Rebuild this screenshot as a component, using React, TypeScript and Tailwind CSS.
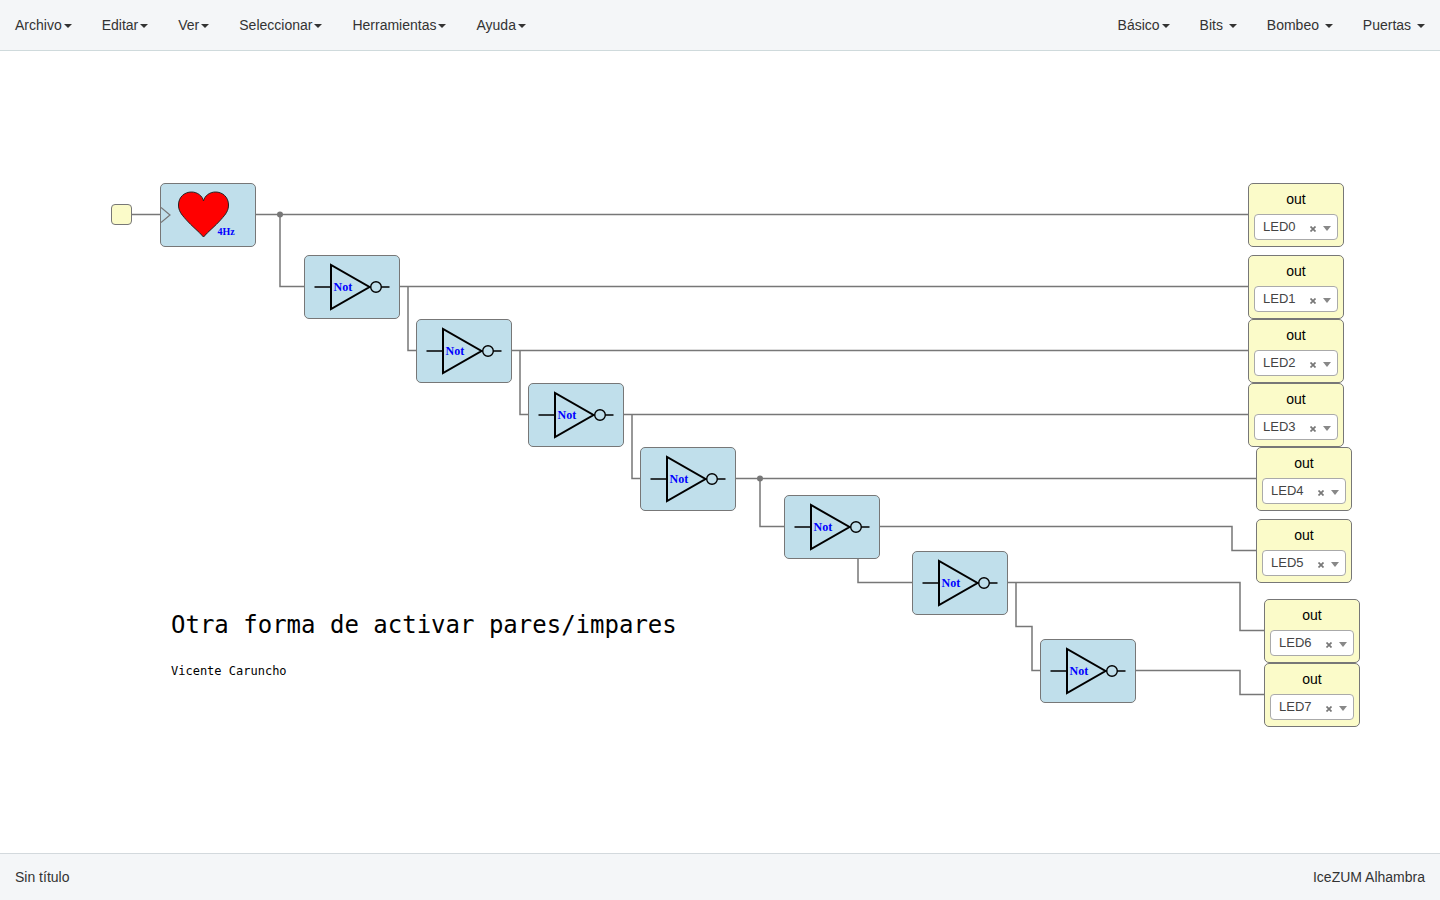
type Point = { x: number; y: number };

const leftMenus = ['Archivo', 'Editar', 'Ver', 'Seleccionar', 'Herramientas', 'Ayuda'];
const rightMenus = ['Básico', 'Bits ', 'Bombeo ', 'Puertas '];

const gates: Point[] = [
  { x: 304, y: 204 },
  { x: 416, y: 268 },
  { x: 528, y: 332 },
  { x: 640, y: 396 },
  { x: 784, y: 444 },
  { x: 912, y: 500 },
  { x: 1040, y: 588 },
];

const outputs: Point[] = [
  { x: 1248, y: 132 },
  { x: 1248, y: 204 },
  { x: 1248, y: 268 },
  { x: 1248, y: 332 },
  { x: 1256, y: 396 },
  { x: 1256, y: 468 },
  { x: 1264, y: 548 },
  { x: 1264, y: 612 },
];

const pins = ['LED0', 'LED1', 'LED2', 'LED3', 'LED4', 'LED5', 'LED6', 'LED7'];

const wires = [
  'M132 163.5H160',
  'M256 163.5H1248',
  'M280 163.5V235.5H304',
  'M400 235.5H1248',
  'M408 235.5V299.5H416',
  'M512 299.5H1248',
  'M520 299.5V363.5H528',
  'M624 363.5H1248',
  'M632 363.5V427.5H640',
  'M736 427.5H1256',
  'M760 427.5V475.5H784',
  'M880 475.5H1232V499.5H1256',
  'M858 475.5V531.5H912',
  'M1008 531.5H1240V579.5H1264',
  'M1016 531.5V575.5H1032V619.5H1040',
  'M1136 619.5H1240V643.5H1264',
];

function Menu({ label }: { label: string }) {
  return (
    <button type="button" className="flex items-center gap-0.5 whitespace-pre px-[15px] py-[15px] leading-5">
      {label}
      <span className="mt-0.5 border-x-4 border-t-4 border-x-transparent border-t-[#333]" />
    </button>
  );
}

function NotGate({ x, y }: Point) {
  return (
    <div
      className="absolute h-16 w-24 rounded-[5px] border border-[#777] bg-[#c0dfeb]"
      style={{ left: x, top: y }}
    >
      <svg viewBox="1 1 94 62" className="h-full w-full" fill="none" stroke="#000">
        <path d="M10.5 32H27M77.3 32H85.5" strokeWidth="1.3" />
        <path d="M27 10V54L65.5 32Z" strokeWidth="2" />
        <circle cx="72" cy="32" r="5.3" strokeWidth="1.4" />
        <text
          x="29.5"
          y="36"
          fill="#00f"
          stroke="none"
          fontSize="12"
          fontWeight="700"
          fontFamily="'Liberation Serif', serif"
        >
          Not
        </text>
      </svg>
    </div>
  );
}

function HeartBlock({ x, y }: Point) {
  return (
    <div
      className="absolute h-16 w-24 rounded-[5px] border border-[#777] bg-[#c0dfeb]"
      style={{ left: x, top: y }}
    >
      <svg viewBox="1 1 94 62" className="h-full w-full" fill="none">
        <path d="M1 24.5L10 32L1 39.5" stroke="#777" strokeWidth="1.2" />
        <path
          d="M43.5 54C38.5 48 32 43.5 26 36.5C21 31 18.500 27.500 18.500 22C18.500 14 24.500 9 31.500 9C37.500 9 42.500 13 43.500 18C44.500 13 49.500 9 55.500 9C62.500 9 68.500 14 68.500 22C68.500 27.500 66 31 61 36.500C55 43.500 48.500 48 43.500 54Z"
          fill="#f00"
          stroke="#222"
          strokeWidth="1"
        />
        <text
          x="57.5"
          y="52"
          fill="#00f"
          fontSize="10"
          fontWeight="700"
          fontFamily="'Liberation Serif', serif"
        >
          4Hz
        </text>
      </svg>
    </div>
  );
}

function OutputBlock({ x, y, pin }: Point & { pin: string }) {
  return (
    <div
      className="absolute flex h-16 w-24 flex-col items-center rounded-[5px] border border-[#777] bg-[#fbfbc9] pt-[5px]"
      style={{ left: x, top: y }}
    >
      <label htmlFor={pin} className="leading-5 text-black">
        out
      </label>
      <div className="relative mt-[5px] h-[26px] w-[84px]">
        <select
          id={pin}
          defaultValue={pin}
          className="block h-full w-full appearance-none rounded border border-[#aaa] bg-white pb-px pl-2 text-[13px] leading-5 text-[#444]"
        >
          {pins.map((name) => (
            <option key={name}>{name}</option>
          ))}
        </select>
        <button
          type="button"
          aria-label={`Quitar ${pin}`}
          className="absolute right-5 top-[9px] flex h-3 w-2.5 items-center justify-center"
        >
          <svg viewBox="0 0 6 6" className="h-1.5 w-1.5" stroke="#777" strokeWidth="1.7">
            <path d="M.5 .5L5.5 5.5M5.5 .5L.5 5.5" />
          </svg>
        </button>
        <span className="pointer-events-none absolute right-[7px] top-3 border-x-4 border-t-5 border-x-transparent border-t-[#888]" />
      </div>
    </div>
  );
}

export default function App() {
  return (
    <div className="flex min-h-screen flex-col bg-white font-['Liberation_Sans',Arial,sans-serif] text-sm text-[#333]">
      <nav className="flex justify-between border-b border-[#cfdadc] bg-[#f4f6f8]">
        <div className="flex">
          {leftMenus.map((label) => (
            <Menu key={label} label={label} />
          ))}
        </div>
        <div className="flex">
          {rightMenus.map((label) => (
            <Menu key={label} label={label} />
          ))}
        </div>
      </nav>

      <main className="relative min-h-[700px] grow overflow-hidden">
        <svg className="absolute inset-0 h-full w-full" fill="none" stroke="#777" strokeWidth="1.5">
          {wires.map((d) => (
            <path key={d} d={d} />
          ))}
          <circle cx="280" cy="163.5" r="3" fill="#777" stroke="none" />
          <circle cx="760" cy="427.5" r="3" fill="#777" stroke="none" />
        </svg>

        <div className="absolute left-[111px] top-[153px] h-[21px] w-[21px] rounded-[4px] border border-[#777] bg-[#fbfbc9]" />
        <HeartBlock x={160} y={132} />
        {gates.map((gate) => (
          <NotGate key={gate.x} x={gate.x} y={gate.y} />
        ))}
        {outputs.map((output, i) => (
          <OutputBlock key={pins[i]} x={output.x} y={output.y} pin={pins[i]} />
        ))}

        <div className="absolute left-[171px] top-[558px] whitespace-nowrap font-['DejaVu_Sans_Mono',monospace] text-black">
          <h1 className="text-2xl leading-8">Otra forma de activar pares/impares</h1>
          <p className="mt-[18px] text-xs leading-6">Vicente Caruncho</p>
        </div>
      </main>

      <footer className="flex justify-between border-t border-[#d3d9dd] bg-[#f4f6f8] px-[15px] py-[13px] leading-5">
        <span>Sin título</span>
        <span>IceZUM Alhambra</span>
      </footer>
    </div>
  );
}
